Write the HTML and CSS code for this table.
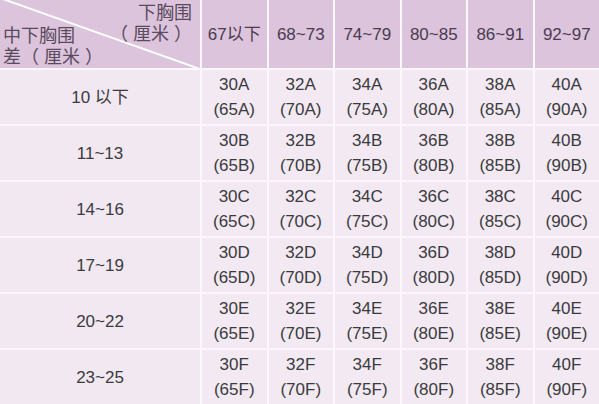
FILE: index.html
```html
<!DOCTYPE html>
<html lang="zh">
<head>
<meta charset="utf-8">
<link rel="stylesheet" href="styles.css">
</head>
<body>
<div class="table">
  <div class="cell head corner">
    <svg class="diag" viewBox="0 0 200 68" preserveAspectRatio="none"><line x1="0" y1="-2" x2="200" y2="69" stroke="#ffffff" stroke-width="2"/></svg>
    <div class="ctop">下胸围<br><span class="po">（</span>厘米<span class="pc">）</span></div>
    <div class="cbot">中下胸围<br>差<span class="po">（</span>厘米<span class="pc">）</span></div>
  </div>
  <div class="cell head">67以下</div>
  <div class="cell head">68~73</div>
  <div class="cell head">74~79</div>
  <div class="cell head">80~85</div>
  <div class="cell head">86~91</div>
  <div class="cell head">92~97</div>

  <div class="cell label">10 以下</div>
  <div class="cell">30A<br>(65A)</div>
  <div class="cell">32A<br>(70A)</div>
  <div class="cell">34A<br>(75A)</div>
  <div class="cell">36A<br>(80A)</div>
  <div class="cell">38A<br>(85A)</div>
  <div class="cell">40A<br>(90A)</div>

  <div class="cell label">11~13</div>
  <div class="cell">30B<br>(65B)</div>
  <div class="cell">32B<br>(70B)</div>
  <div class="cell">34B<br>(75B)</div>
  <div class="cell">36B<br>(80B)</div>
  <div class="cell">38B<br>(85B)</div>
  <div class="cell">40B<br>(90B)</div>

  <div class="cell label">14~16</div>
  <div class="cell">30C<br>(65C)</div>
  <div class="cell">32C<br>(70C)</div>
  <div class="cell">34C<br>(75C)</div>
  <div class="cell">36C<br>(80C)</div>
  <div class="cell">38C<br>(85C)</div>
  <div class="cell">40C<br>(90C)</div>

  <div class="cell label">17~19</div>
  <div class="cell">30D<br>(65D)</div>
  <div class="cell">32D<br>(70D)</div>
  <div class="cell">34D<br>(75D)</div>
  <div class="cell">36D<br>(80D)</div>
  <div class="cell">38D<br>(85D)</div>
  <div class="cell">40D<br>(90D)</div>

  <div class="cell label">20~22</div>
  <div class="cell">30E<br>(65E)</div>
  <div class="cell">32E<br>(70E)</div>
  <div class="cell">34E<br>(75E)</div>
  <div class="cell">36E<br>(80E)</div>
  <div class="cell">38E<br>(85E)</div>
  <div class="cell">40E<br>(90E)</div>

  <div class="cell label">23~25</div>
  <div class="cell">30F<br>(65F)</div>
  <div class="cell">32F<br>(70F)</div>
  <div class="cell">34F<br>(75F)</div>
  <div class="cell">36F<br>(80F)</div>
  <div class="cell">38F<br>(85F)</div>
  <div class="cell">40F<br>(90F)</div>
</div>
</body>
</html>
```
FILE: styles.css
```css
html, body {
  margin: 0;
  padding: 0;
  background: #ffffff;
}
body {
  width: 599px;
  height: 404px;
  overflow: hidden;
  font-family: "Liberation Sans", "Noto Sans CJK SC", sans-serif;
  font-size: 17px;
}
.table {
  display: grid;
  grid-template-columns: 200px repeat(6, 1fr);
  grid-template-rows: 68px repeat(6, 54px);
  gap: 2px;
  width: 599px;
  height: 404px;
  background: #fbf7fb;
}
.cell {
  display: flex;
  align-items: center;
  justify-content: center;
  text-align: center;
  line-height: 25px;
  background: #f2e9f2;
  color: #3b3b3e;
}
.head {
  background: #dcc4dc;
  color: #4a3b50;
}
.label {
  background: #f1e8f1;
}
.corner {
  position: relative;
  display: grid;
  grid-template-columns: 1fr;
  grid-template-rows: 1fr;
  grid-template-areas: "a";
  justify-content: stretch;
  align-content: stretch;
  justify-items: stretch;
  align-items: stretch;
  line-height: 21px;
  font-size: 18px;
  color: #5a4a5e;
}
.po {
  margin-right: 5px;
}
.pc {
  margin-left: 5px;
}
.diag {
  position: absolute;
  left: 0;
  top: 0;
  width: 200px;
  height: 68px;
}
.ctop {
  grid-area: a;
  align-self: start;
  justify-self: end;
  text-align: right;
  padding: 3px 8px 0 0;
  position: relative;
}
.cbot {
  grid-area: a;
  align-self: end;
  justify-self: start;
  text-align: left;
  padding: 0 0 0 3px;
  position: relative;
}
```
